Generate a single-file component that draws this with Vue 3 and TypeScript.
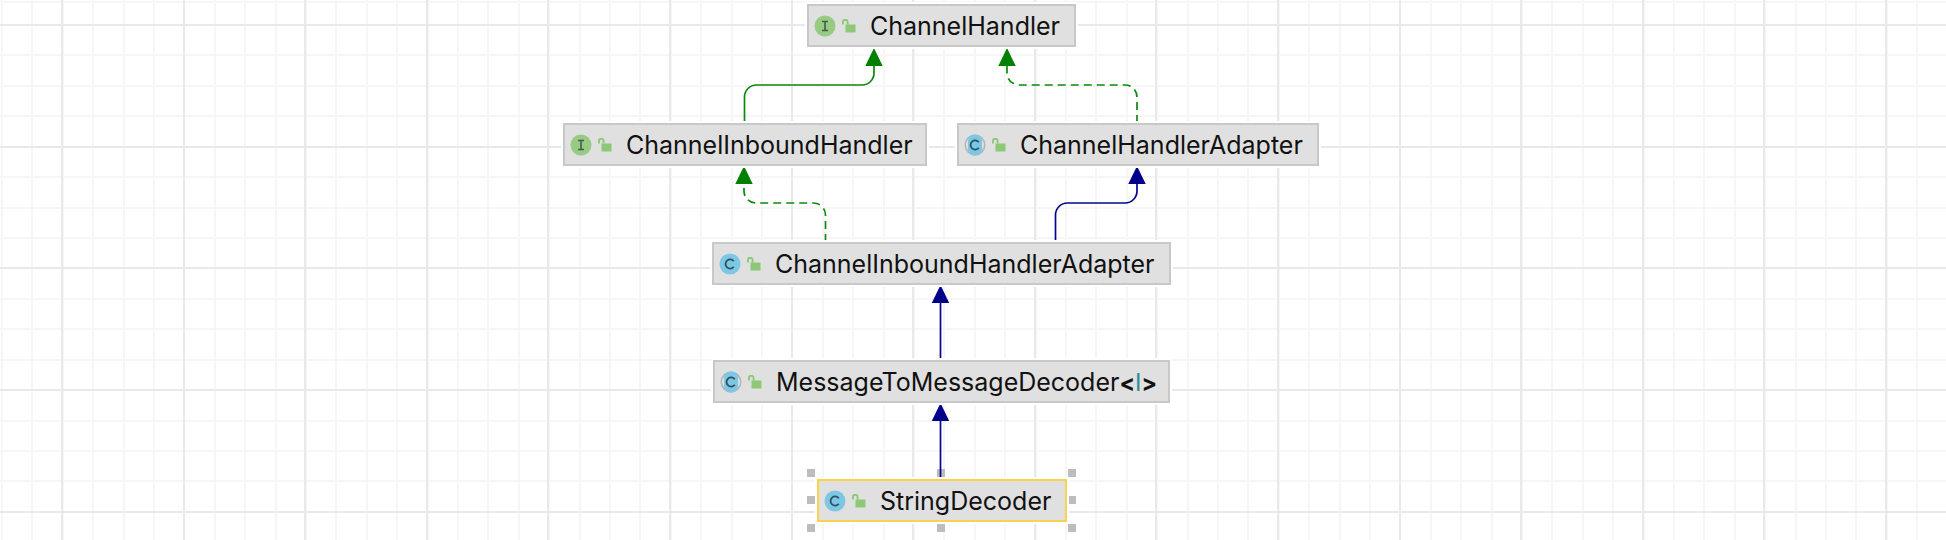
<script setup lang="ts">
type Kind = 'interface' | 'class' | 'abstract'
interface DiagramNode {
  name: string
  generic?: string
  kind: Kind
  x: number
  y: number
  w: number
  selected?: boolean
}
interface Edge {
  d: string
  tip: [number, number]
  color: string
  dashed?: boolean
}

const nodes: DiagramNode[] = [
  { name: 'ChannelHandler', kind: 'interface', x: 807, y: 4, w: 269 },
  { name: 'ChannelInboundHandler', kind: 'interface', x: 563, y: 123, w: 364 },
  { name: 'ChannelHandlerAdapter', kind: 'abstract', x: 957, y: 123, w: 362 },
  { name: 'ChannelInboundHandlerAdapter', kind: 'class', x: 712, y: 242, w: 459 },
  { name: 'MessageToMessageDecoder', generic: 'I', kind: 'abstract', x: 713, y: 360, w: 457 },
  { name: 'StringDecoder', kind: 'class', x: 817, y: 479, w: 250, selected: true },
]

const GREEN = '#0b8a0b'
const BLUE = '#00088f'

const edges: Edge[] = [
  { d: 'M744.5 123V97a12 12 0 0 1 12-12H862a12 12 0 0 0 12-12V62', tip: [874, 48], color: GREEN },
  { d: 'M1137 123V97a12 12 0 0 0-12-12H1019a12 12 0 0 1-12-12V62', tip: [1007, 48], color: GREEN, dashed: true },
  { d: 'M825.5 242V215a12 12 0 0 0-12-12H756a12 12 0 0 1-12-12V180', tip: [744, 166], color: GREEN, dashed: true },
  { d: 'M1055.5 242V215a12 12 0 0 1 12-12H1125a12 12 0 0 0 12-12V180', tip: [1137, 166], color: BLUE },
  { d: 'M940.5 360V300', tip: [940.5, 285], color: BLUE },
  { d: 'M940.5 479V418', tip: [940.5, 403], color: BLUE },
]

function arrow(tip: [number, number]): string {
  const [x, y] = tip
  return `${x},${y} ${x - 8.7},${y + 18} ${x + 8.7},${y + 18}`
}

const handles = [
  [810.7, 473], [941, 473], [1072, 473],
  [810.7, 500], [1072, 500],
  [810.7, 527.7], [941, 527.7], [1072, 527.7],
]

function place(n: DiagramNode) {
  return { left: `${n.x}px`, top: `${n.y}px`, width: `${n.w}px` }
}
function handleAt(h: number[]) {
  return { left: `${h[0] - 4}px`, top: `${h[1] - 4}px` }
}
</script>

<template>
  <div class="canvas">
    <span v-for="(h, i) in handles" :key="i" class="handle" :style="handleAt(h)"></span>

    <svg class="edges" width="1946" height="540" viewBox="0 0 1946 540">
      <g v-for="(e, i) in edges" :key="i">
        <path
          :d="e.d"
          fill="none"
          :stroke="e.color"
          stroke-width="1.7"
          :stroke-dasharray="e.dashed ? '8 5' : undefined"
        />
        <polygon :points="arrow(e.tip)" :fill="e.color === GREEN ? '#008000' : '#00008b'" />
      </g>
    </svg>

    <div
      v-for="n in nodes"
      :key="n.name"
      class="node"
      :class="{ selected: n.selected }"
      :style="place(n)"
    >
      <svg class="icon" width="24" height="24" viewBox="0 0 24 24">
        <template v-if="n.kind === 'interface'">
          <circle cx="12" cy="12" r="10.5" fill="#97cb83" />
          <path d="M9 7.5h6M9 16.5h6M12 7.5v9" stroke="#4a5a48" stroke-width="1.6" fill="none" />
        </template>
        <template v-else-if="n.kind === 'class'">
          <circle cx="12" cy="12" r="10.5" fill="#7cc7e3" />
          <path d="M15.8 9.2a4.6 4.6 0 1 0 0 5.6" stroke="#34505f" stroke-width="1.8" fill="none" />
        </template>
        <template v-else>
          <circle cx="12" cy="12" r="10.5" fill="#aeb6bc" />
          <circle cx="12" cy="12" r="9" fill="#e0e0e0" />
          <rect x="5" y="1.5" width="14" height="21" rx="6" fill="#7cc7e3" />
          <path d="M15.8 9.2a4.6 4.6 0 1 0 0 5.6" stroke="#34505f" stroke-width="1.8" fill="none" />
        </template>
      </svg>
      <svg class="lock" width="14" height="14" viewBox="0 0 14 14">
        <rect x="3.5" y="5.5" width="10" height="8" fill="#8cc876" />
        <path d="M1 5.5V3a2.3 2.3 0 0 1 4.6 0v2.5" fill="none" stroke="#8cc876" stroke-width="1.9" />
      </svg>
      <span class="label">{{ n.name }}<template v-if="n.generic"><b>&lt;</b><span class="param">{{ n.generic }}</span><b>&gt;</b></template></span>
    </div>
  </div>
</template>

<style scoped>
.canvas {
  position: relative;
  width: 1946px;
  height: 540px;
  overflow: hidden;
  background-color: #fff;
  background-image:
    repeating-linear-gradient(to right, #e9e9e9 0, #e9e9e9 2px, transparent 2px, transparent 121.6px),
    repeating-linear-gradient(to bottom, #e9e9e9 0, #e9e9e9 2px, transparent 2px, transparent 121.7px),
    repeating-linear-gradient(to right, #f6f6f6 0, #f6f6f6 2px, transparent 2px, transparent 30.4px),
    repeating-linear-gradient(to bottom, #f6f6f6 0, #f6f6f6 2px, transparent 2px, transparent 30.425px);
  background-position: 61px 0, 0 24px, 1px 0, 0 24px;
}
.edges {
  position: absolute;
  left: 0;
  top: 0;
}
.handle {
  position: absolute;
  width: 8px;
  height: 8px;
  background: #bdbdbd;
}
.node {
  position: absolute;
  box-sizing: border-box;
  height: 43px;
  display: flex;
  align-items: center;
  padding-left: 4px;
  background: #e0e0e0;
  border: 2px solid #c8c8c8;
  box-shadow: 0 0 0 2px #fff;
  font-family: Inter, "Liberation Sans", sans-serif;
  font-size: 25px;
  color: #111;
  white-space: nowrap;
}
.node.selected {
  border-color: #fbd24e;
}
.icon {
  flex: none;
}
.lock {
  flex: none;
  margin-left: 5px;
}
.label {
  margin-left: 14px;
}
.label b {
  font-weight: 700;
  font-size: 23px;
}
.param {
  color: #2b8c9c;
  font-size: 24px;
}
</style>
